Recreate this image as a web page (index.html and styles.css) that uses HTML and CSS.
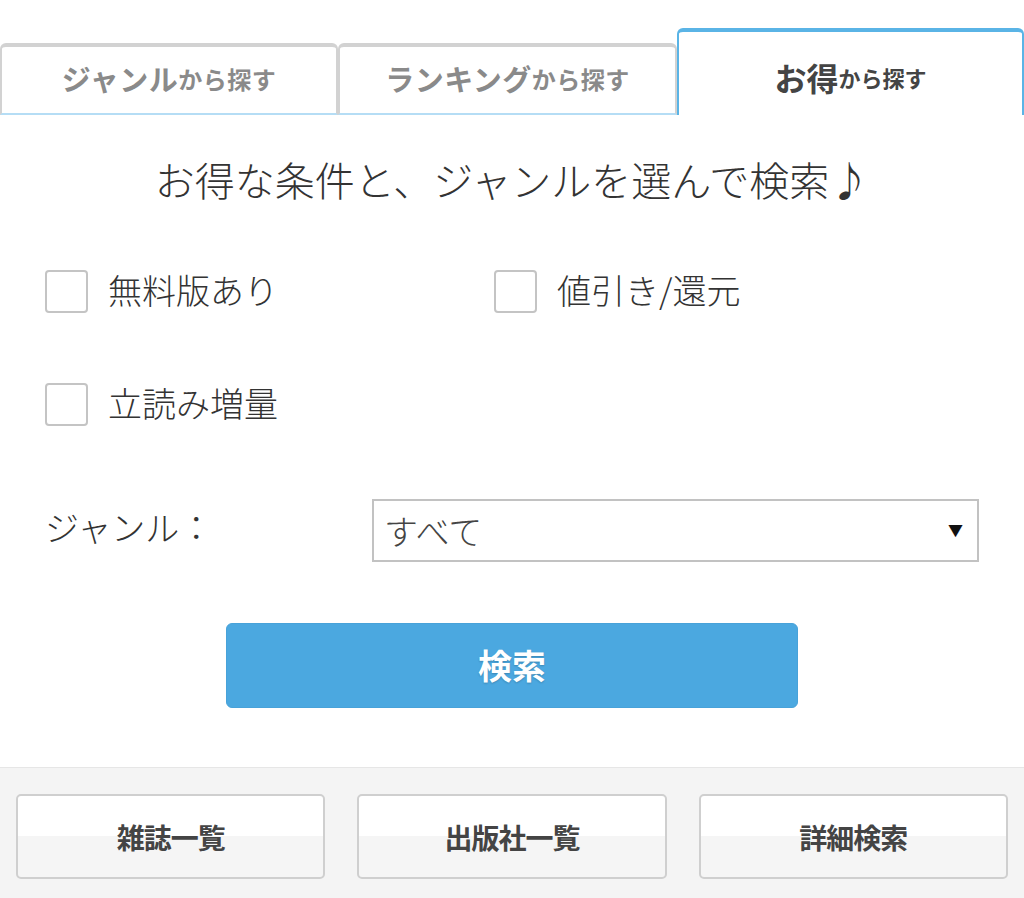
FILE: index.html
```html
<!DOCTYPE html>
<html lang="ja">
<head>
    <meta charset="UTF-8">
    <meta name="viewport" content="width=device-width, initial-scale=1.0">
    <title>お得から探す</title>
    <link rel="stylesheet" href="styles.css">
</head>
<body>

    <div class="tabs">
        <div class="tab"><span class="big">ジャンル</span><span class="small">から探す</span></div>
        <div class="tab"><span class="big">ランキング</span><span class="small">から探す</span></div>
        <div class="tab active"><span class="big">お得</span><span class="small">から探す</span></div>
    </div>

    <div class="main">
        <h2 class="title">お得な条件と、ジャンルを選んで検索♪</h2>

        <div class="checks">
            <label class="check"><input type="checkbox" name="free"><span>無料版あり</span></label>
            <label class="check"><input type="checkbox" name="discount"><span>値引き/還元</span></label>
            <label class="check"><input type="checkbox" name="preview"><span>立読み増量</span></label>
        </div>

        <div class="genre_row">
            <label class="genre_label" for="genre">ジャンル：</label>
            <div class="select_wrap">
                <select id="genre" class="genre_select">
                    <option>すべて</option>
                </select>
                <span class="arrow">▼</span>
            </div>
        </div>

        <div class="search_row">
            <button class="search_button" type="button">検索</button>
        </div>
    </div>

    <div class="footer_links">
        <a class="link_button" href="#">雑誌一覧</a>
        <a class="link_button" href="#">出版社一覧</a>
        <a class="link_button" href="#">詳細検索</a>
    </div>

</body>
</html>
```

FILE: styles.css
```css
body { font-family: "Noto Sans CJK JP", "Noto Sans", sans-serif; background: #fff; color: #333; margin: 0; padding: 0; }

.tabs { display: grid; grid-template-columns: 338px 339px 1fr; align-items: end; padding-top: 28px; }
.tab { height: 62px; padding-bottom: 4px; background: #fff; border: 2px solid #d2d2d2; border-top-width: 4px; border-bottom: 2px solid #b5ddf5; border-radius: 6px 6px 0 0; display: flex; align-items: center; justify-content: center; color: #8a8a8a; font-weight: bold; letter-spacing: 0.5px; }
.tab .big { font-size: 29px; }
.tab .small { font-size: 24px; }
.tab.active { height: 77px; padding: 6px 0 0; border-color: #5ab4e6; border-bottom: none; color: #444; letter-spacing: 0; }
.tab.active .big { font-size: 32px; }
.tab.active .small { font-size: 22px; }

.main { padding: 38px 45px 59px; }
.title { margin: 0; text-align: center; font-size: 40px; line-height: 52px; font-weight: 300; color: #333; }

.checks { display: grid; grid-template-columns: 449px 1fr; row-gap: 70px; margin-top: 65px; }
.check { display: flex; align-items: center; gap: 20px; font-size: 34px; line-height: 43px; font-weight: 300; color: #333; }
.check span { margin-top: -4px; }
.check input { appearance: none; -webkit-appearance: none; width: 43px; height: 43px; margin: 0; border: 2px solid #c4c4c4; border-radius: 4px; background: #fff; }

.genre_row { display: flex; align-items: center; margin-top: 73px; }
.genre_label { width: 327px; font-size: 34px; font-weight: 300; color: #333; margin-top: -8px; }
.select_wrap { position: relative; flex: 1; }
.genre_select { appearance: none; -webkit-appearance: none; width: 100%; height: 63px; border: 2px solid #c2c2c2; border-radius: 0; background: #fff; font-family: inherit; font-size: 34px; font-weight: 300; color: #444; padding: 0 40px 0 10px; }
.arrow { position: absolute; right: 16px; top: 20px; font-size: 15px; color: #111; pointer-events: none; }

.search_row { display: flex; justify-content: center; margin-top: 61px; }
.search_button { width: 572px; height: 85px; background: #4ba8e0; border: 1px solid #48a2d9; border-radius: 6px; color: #fff; font-family: inherit; font-size: 34px; font-weight: bold; text-shadow: 0 1px 2px rgba(0,0,0,0.2); padding-bottom: 4px; }

.footer_links { display: grid; grid-template-columns: 1fr 1fr 1fr; gap: 32px; background: #f4f4f4; border-top: 1px solid #e6e6e6; padding: 26px 16px 27px; }
.link_button { height: 81px; display: flex; align-items: center; justify-content: center; border: 2px solid #cfcfcf; border-radius: 5px; background: linear-gradient(#fff 50%, #f5f5f5 50%); color: #444; font-size: 28px; font-weight: bold; text-decoration: none; letter-spacing: -1px; }
```
